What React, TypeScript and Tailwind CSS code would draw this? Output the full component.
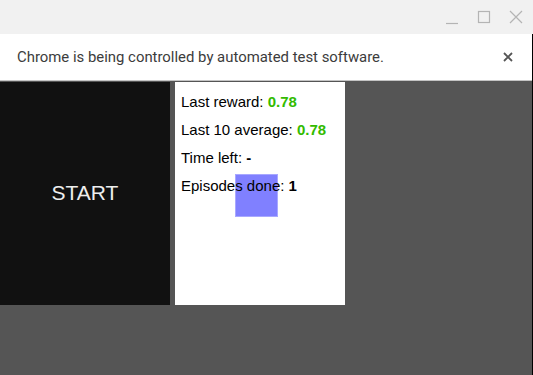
export default function App() {
  return (
    <div className="w-[533px] h-[375px] overflow-hidden flex flex-col bg-[#555555] font-['Roboto',sans-serif]">
      {/* title bar */}
      <div className="h-[34px] bg-[#f1f1f1] flex items-center justify-end pr-[10px] gap-[18px] shrink-0">
        <svg width="14" height="14" viewBox="0 0 14 14" className="mt-[2px]">
          <line x1="1" y1="12.5" x2="13" y2="12.5" stroke="#b4b4b4" strokeWidth="1.2" />
        </svg>
        <svg width="14" height="14" viewBox="0 0 14 14">
          <rect x="1.5" y="1.5" width="11" height="11" fill="none" stroke="#b4b4b4" strokeWidth="1.2" />
        </svg>
        <svg width="14" height="14" viewBox="0 0 14 14">
          <path d="M1 1 L13 13 M13 1 L1 13" stroke="#b4b4b4" strokeWidth="1.2" />
        </svg>
      </div>
      <div className="flex-1 flex flex-col border-r border-black">
        {/* info bar */}
        <div className="h-[47px] bg-white flex items-center justify-between pl-[17px] pr-[19px] shrink-0 border-b border-[#c4c4c4]">
          <span className="text-[14.9px] text-[#3c3c3c]">Chrome is being controlled by automated test software.</span>
          <svg width="10" height="10" viewBox="0 0 10 10">
            <path d="M1 1 L9 9 M9 1 L1 9" stroke="#555" strokeWidth="1.8" />
          </svg>
        </div>
        {/* content */}
        <div className="flex font-['Liberation_Sans',Arial,sans-serif] mt-[1px]">
          <div className="w-[170px] h-[223px] bg-[#111111] flex items-center justify-center">
            <span className="text-[21px] text-[#eeeeee] mt-[-2px]">START</span>
          </div>
          <div className="relative w-[170px] h-[223px] bg-white ml-[5px] pl-[6px] pt-[11px] text-[15px] text-black leading-[17px]">
            <div className="absolute left-[60px] top-[92px] w-[43px] h-[43px] bg-[#8080ff] border border-[#a8a8ff]" />
            <div className="relative flex flex-col gap-[11px]">
              <div>Last reward: <b className="text-[#33bb00]">0.78</b></div>
              <div>Last 10 average: <b className="text-[#33bb00]">0.78</b></div>
              <div>Time left: <b>-</b></div>
              <div>Episodes done: <b>1</b></div>
            </div>
          </div>
        </div>
      </div>
    </div>
  );
}
